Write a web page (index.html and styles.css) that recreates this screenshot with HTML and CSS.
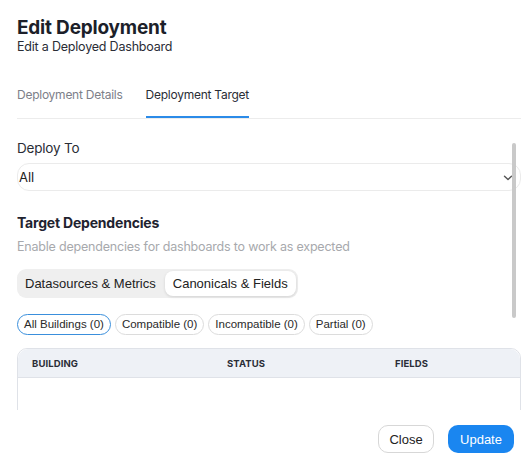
FILE: index.html
```html
<!DOCTYPE html>
<html>
<head>
<meta charset="utf-8">
<link rel="stylesheet" href="styles.css">
</head>
<body>
<div class="modal">
  <header class="head">
    <h1 class="title">Edit Deployment</h1>
    <p class="subtitle">Edit a Deployed Dashboard</p>
  </header>
  <nav class="tabs">
    <span class="tab">Deployment Details</span>
    <span class="tab active">Deployment Target</span>
  </nav>
  <div class="scroll">
    <div class="body">
      <label class="label">Deploy To</label>
      <div class="select">
        <span>All</span>
        <svg class="chev" width="10" height="6" viewBox="0 0 10 6"><path d="M1.5 1.2 L5 4.6 L8.5 1.2" fill="none" stroke="#555" stroke-width="1.4" stroke-linecap="round" stroke-linejoin="round"/></svg>
      </div>
      <h2 class="section">Target Dependencies</h2>
      <p class="hint">Enable dependencies for dashboards to work as expected</p>
      <div class="seg">
        <span class="seg-item">Datasources &amp; Metrics</span>
        <span class="seg-item on">Canonicals &amp; Fields</span>
      </div>
      <div class="chips">
        <span class="chip sel">All Buildings (0)</span>
        <span class="chip">Compatible (0)</span>
        <span class="chip">Incompatible (0)</span>
        <span class="chip">Partial (0)</span>
      </div>
      <div class="table">
        <div class="thead">
          <span class="th c1">BUILDING</span>
          <span class="th c2">STATUS</span>
          <span class="th c3">FIELDS</span>
        </div>
        <div class="tbody"></div>
      </div>
    </div>
    <div class="bar"></div>
  </div>
  <footer class="foot">
    <button class="btn close">Close</button>
    <button class="btn primary">Update</button>
  </footer>
</div>
</body>
</html>
```
FILE: styles.css
```css
* { box-sizing: border-box; }
html, body { margin: 0; padding: 0; background: #fff; }
body { font-family: "Inter", "Liberation Sans", sans-serif; color: #1f2330; width: 530px; height: 470px; overflow: hidden; }

.modal { padding: 0 9px 0 17px; }

.head { padding-top: 16px; }
.title { margin: 0; font-size: 19px; font-weight: 700; line-height: 24px; letter-spacing: -0.2px; color: #1c1f2a; }
.subtitle { margin: -1px 0 0; font-size: 12.5px; line-height: 16px; color: #2a2d36; letter-spacing: -0.2px; }

.tabs { display: flex; gap: 23px; margin-top: 31px; border-bottom: 1px solid #ececec; }
.tab { font-size: 12px; line-height: 17px; padding-bottom: 15px; color: #7d8089; letter-spacing: -0.25px; }
.tab.active { color: #2a2d36; border-bottom: 2px solid #2b8be8; padding-bottom: 13px; }

.scroll { position: relative; height: 291px; overflow: hidden; }
.body { padding-top: 20px; }
.bar { position: absolute; right: 5px; top: 24px; width: 4px; height: 175px; background: #c9c9c9; border-radius: 2px; }

.label { display: block; font-size: 13.5px; line-height: 18px; color: #2a2d36; letter-spacing: -0.2px; }
.select { margin-top: 6px; height: 28px; border: 1px solid #ebebeb; border-radius: 12px; display: flex; align-items: center; justify-content: space-between; padding: 0 7px 0 1px; font-size: 13px; color: #222; }
.chev { margin-top: 1px; }

.section { margin: 23px 0 0; font-size: 14px; line-height: 18px; font-weight: 700; color: #1f2330; letter-spacing: -0.2px; }
.hint { margin: 7px 0 0; font-size: 12.5px; line-height: 16px; color: #a7a9ad; letter-spacing: -0.2px; }

.seg { margin-top: 14px; display: inline-flex; align-items: center; background: #efefef; border-radius: 9px; padding: 2px; height: 29px; }
.seg-item { font-family: "Liberation Sans", Arial, sans-serif; font-size: 13px; color: #222; padding: 0 9px 0 6px; line-height: 25px; }
.seg-item.on { background: #fff; border-radius: 8px; box-shadow: 0 1px 3px rgba(0,0,0,0.12); padding: 0 8px; }

.chips { display: flex; gap: 4px; margin-top: 16px; }
.chip { font-family: "Liberation Sans", Arial, sans-serif; font-size: 11.5px; color: #2a2a2a; border: 1px solid #dcdcdc; border-radius: 11px; height: 21px; line-height: 19px; padding: 0 6px; }
.chip.sel { border-color: #3a8fdc; }

.table { margin-top: 13px; border: 1px solid #dfe2e8; border-radius: 10px 10px 0 0; height: 80px; }
.thead { display: flex; align-items: center; height: 29px; background: #eef1f6; border-bottom: 1px solid #dfe2e8; border-radius: 10px 10px 0 0; font-size: 9.5px; font-weight: 700; color: #2a2d36; letter-spacing: 0.1px; }
.th.c1 { padding-left: 14px; width: 209px; }
.th.c2 { width: 168px; }

.foot { display: flex; justify-content: flex-end; gap: 14px; padding-top: 15px; padding-right: 7px; }
.btn { font-family: "Liberation Sans", Arial, sans-serif; font-size: 13px; height: 28px; border-radius: 10px; padding: 0 10px; cursor: pointer; }
.btn.close { background: #fff; border: 1px solid #d7d7d7; color: #222; width: 56px; }
.btn.primary { background: #1a86f0; border: none; color: #fff; width: 66px; }
```
